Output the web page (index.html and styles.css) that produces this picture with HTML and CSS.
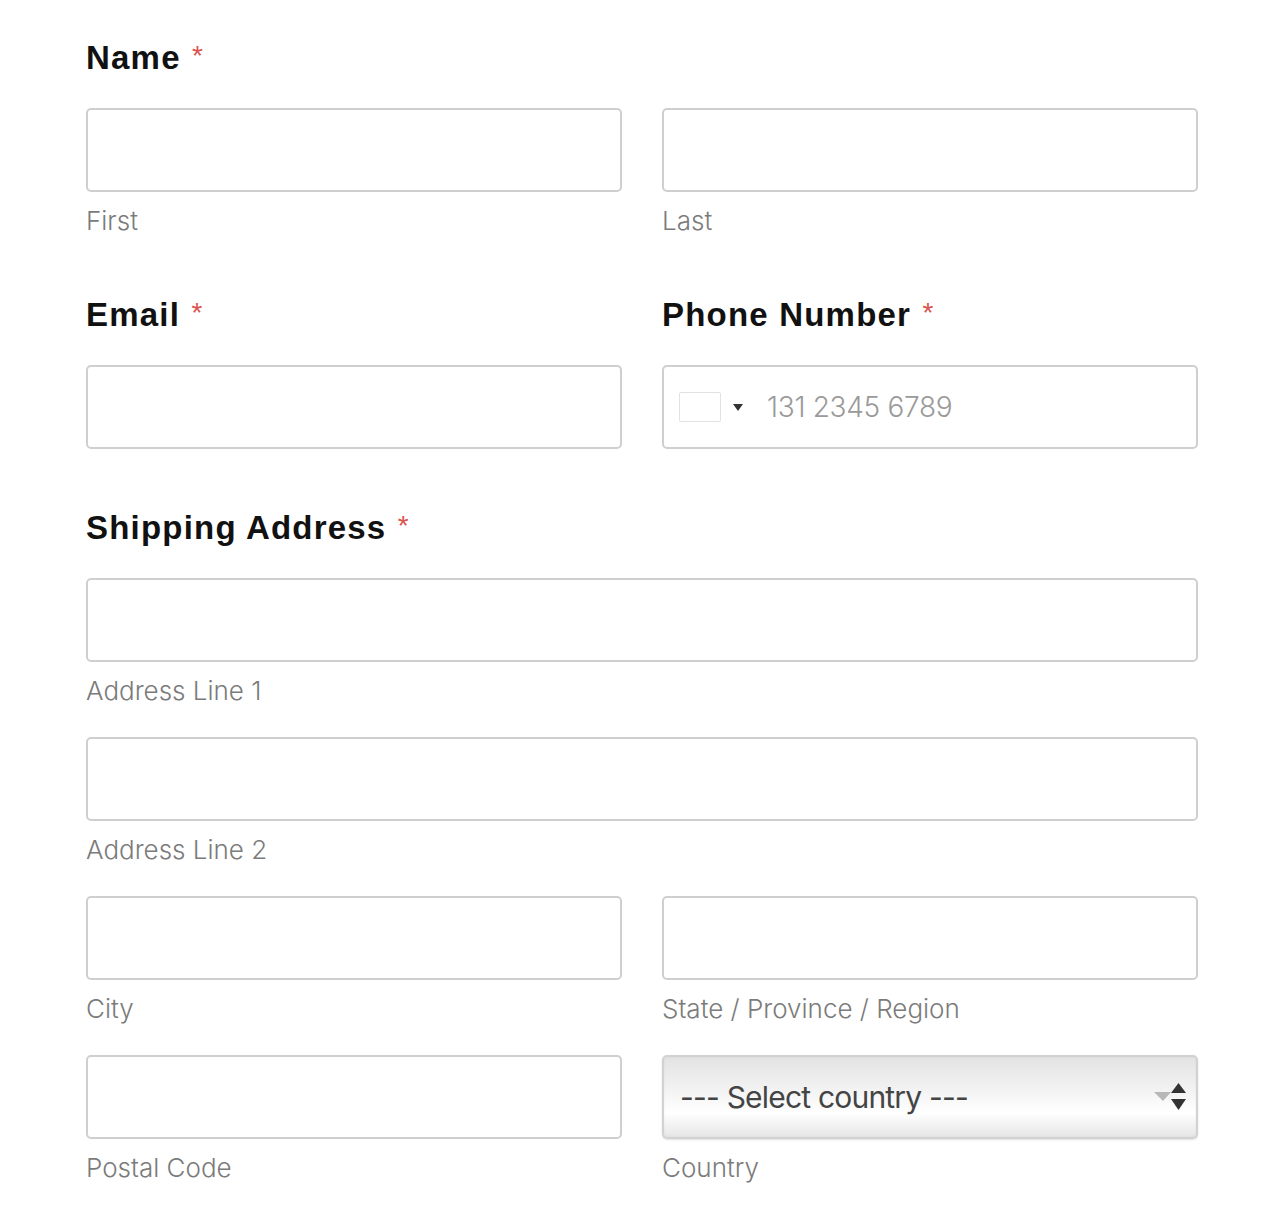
FILE: index.html
```html
<!DOCTYPE html>
<html lang="en">
<head>
<meta charset="utf-8">
<title>Form</title>
<link rel="stylesheet" href="styles.css">
</head>
<body>
<form class="form">
  <section class="group">
    <h2 class="label">Name <span class="req">*</span></h2>
    <div class="cols">
      <div class="sub"><input class="input" type="text"><span class="hint">First</span></div>
      <div class="sub"><input class="input" type="text"><span class="hint">Last</span></div>
    </div>
  </section>

  <div class="cols group">
    <section>
      <h2 class="label">Email <span class="req">*</span></h2>
      <input class="input" type="text">
    </section>
    <section>
      <h2 class="label">Phone Number <span class="req">*</span></h2>
      <div class="input phone">
        <span class="flag"></span>
        <span class="caret"></span>
        <span class="placeholder">131 2345 6789</span>
      </div>
    </section>
  </div>

  <section class="group">
    <h2 class="label">Shipping Address <span class="req">*</span></h2>
    <div class="sub"><input class="input" type="text"><span class="hint">Address Line 1</span></div>
    <div class="sub"><input class="input" type="text"><span class="hint">Address Line 2</span></div>
    <div class="cols">
      <div class="sub"><input class="input" type="text"><span class="hint">City</span></div>
      <div class="sub"><input class="input" type="text"><span class="hint">State / Province / Region</span></div>
    </div>
    <div class="cols">
      <div class="sub"><input class="input" type="text"><span class="hint">Postal Code</span></div>
      <div class="sub">
        <div class="input select">
          <span class="sel-text">--- Select country ---</span>
          <span class="arrows">
            <svg width="34" height="28" viewBox="0 0 34 28">
              <path d="M1 9 L18 9 L10 18 Z" fill="#b8b8b8"/>
              <path d="M18 10 L25.5 0 L33 10 Z" fill="#333"/>
              <path d="M18 16 L33 16 L25.5 27 Z" fill="#333"/>
            </svg>
          </span>
        </div>
        <span class="hint">Country</span>
      </div>
    </div>
  </section>
</form>
</body>
</html>
```

FILE: styles.css
```css
* { box-sizing: border-box; }

body {
  margin: 0;
  background: #fff;
  font-family: "Inter", "Liberation Sans", sans-serif;
}

.form {
  width: 1112px;
  margin: 0 0 0 86px;
  padding-top: 38px;
}

.group {
  margin-bottom: 59px;
}

.cols {
  display: grid;
  grid-template-columns: 536px 536px;
  column-gap: 40px;
}

.label {
  margin: 0 0 30px;
  height: 40px;
  font-family: "Liberation Sans", Arial, sans-serif;
  font-weight: 700;
  font-size: 33px;
  letter-spacing: 1.2px;
  line-height: 40px;
  color: #111;
}

.req {
  color: #d9534f;
  font-weight: 400;
  font-size: 28px;
  line-height: 0;
  margin-left: 1px;
  position: relative;
  top: -4px;
}

.input {
  display: block;
  width: 100%;
  height: 84px;
  margin: 0;
  border: 2px solid #cfcfcf;
  border-radius: 5px;
  background: #fff;
  font: inherit;
}

.sub {
  display: flex;
  flex-direction: column;
}

.hint {
  margin: 14px 0 31px;
  font-size: 26px;
  line-height: 30px;
  font-weight: 300;
  color: #7b7b7b;
}

.group > .sub:last-child .hint,
.group > .cols:last-child .hint {
  margin-bottom: 0;
}

.phone {
  display: flex;
  align-items: center;
  padding-left: 15px;
}

.flag {
  width: 42px;
  height: 30px;
  border: 1px solid #e2e2e2;
  border-radius: 2px;
  background: #fff;
}

.caret {
  width: 0;
  height: 0;
  margin-left: 12px;
  border-left: 5px solid transparent;
  border-right: 5px solid transparent;
  border-top: 7px solid #333;
}

.placeholder {
  margin-left: 24px;
  font-size: 28px;
  font-weight: 300;
  color: #9a9a9a;
  letter-spacing: -0.3px;
}

.select {
  display: flex;
  align-items: center;
  justify-content: space-between;
  padding: 0 9px 0 16px;
  border-color: #d2d2d2;
  background: linear-gradient(to bottom, #e3e3e3 0%, #f0f0f0 35%, #ffffff 70%, #e6e6e6 100%);
  box-shadow: 0 1px 2px rgba(0,0,0,0.12), inset 0 0 3px rgba(0,0,0,0.05);
}

.sel-text {
  font-size: 30px;
  color: #444;
  letter-spacing: -0.8px;
}

.arrows {
  display: flex;
  align-items: center;
}
```
